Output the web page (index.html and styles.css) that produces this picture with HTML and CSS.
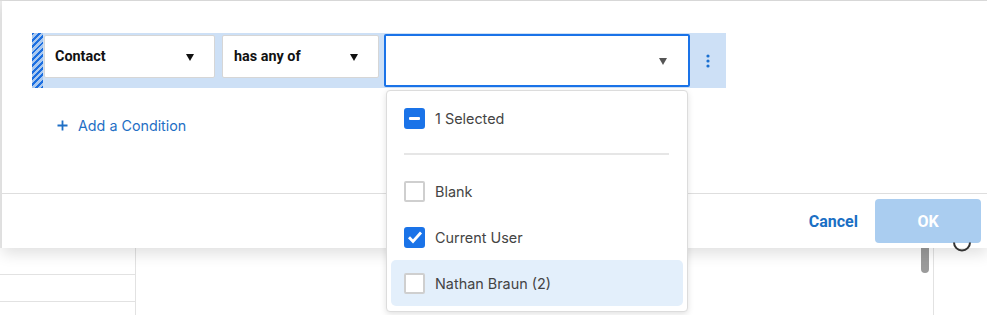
FILE: index.html
```html
<!DOCTYPE html>
<html lang="en">
<head>
    <meta charset="UTF-8">
    <meta name="viewport" content="width=device-width, initial-scale=1.0">
    <title>Filter Conditions</title>
    <link rel="stylesheet" href="styles.css">
</head>
<body>
    <div class="page">
        <div class="page-top"></div>
        <div class="page-table">
            <div class="side-col">
                <div class="side-row"></div>
                <div class="side-row"></div>
                <div class="side-row"></div>
            </div>
            <div class="main-col">
                <div class="scroll-thumb"></div>
            </div>
            <div class="tool-col"></div>
        </div>
    </div>

    <div class="modal">
        <div class="modal-body">
            <div class="condition-row">
                <div class="drag-stripe"></div>
                <div class="field field-source">
                    <span>Contact</span>
                    <span class="caret"></span>
                </div>
                <div class="field field-operator">
                    <span>has any of</span>
                    <span class="caret"></span>
                </div>
                <div class="field field-value">
                    <span></span>
                    <span class="caret caret-grey"></span>
                </div>
                <div class="row-menu">
                    <svg width="4" height="14" viewBox="0 0 4 14"><circle cx="2" cy="2" r="1.6" fill="#1a6fd0"/><circle cx="2" cy="7" r="1.6" fill="#1a6fd0"/><circle cx="2" cy="12" r="1.6" fill="#1a6fd0"/></svg>
                </div>
            </div>
            <a class="add-condition" href="#">
                <svg width="11" height="11" viewBox="0 0 11 11"><path d="M5.5 0.5v10M0.5 5.5h10" stroke="#1f6fc5" stroke-width="1.8"/></svg>
                <span>Add a Condition</span>
            </a>
        </div>
        <div class="modal-footer">
            <button class="btn-cancel">Cancel</button>
            <button class="btn-ok" disabled>OK</button>
        </div>
    </div>

    <svg class="tool-icon" width="20" height="10" viewBox="0 0 20 10"><path d="M2 0.5a8 8 0 0 0 16 0" fill="none" stroke="#333" stroke-width="2"/></svg>

    <div class="dropdown">
        <div class="option option-head">
            <span class="check check-partial"><span class="dash"></span></span>
            <span>1 Selected</span>
        </div>
        <div class="divider"></div>
        <div class="option">
            <span class="check"></span>
            <span>Blank</span>
        </div>
        <div class="option">
            <span class="check check-on">
                <svg width="16" height="14" viewBox="0 0 16 14"><path d="M2 7.2l4 4.2L14 2.5" fill="none" stroke="#fff" stroke-width="2.8"/></svg>
            </span>
            <span>Current User</span>
        </div>
        <div class="option option-hover">
            <span class="check"></span>
            <span>Nathan Braun (2)</span>
        </div>
    </div>
</body>
</html>
```

FILE: styles.css
```css
body {
    margin: 0;
    font-family: Inter, "Noto Sans", sans-serif;
    background: #fff;
    width: 987px;
    height: 315px;
    overflow: hidden;
    position: relative;
}
.page {
    display: flex;
    flex-direction: column;
    height: 315px;
    border-top: 1px solid #dcdcdc;
    box-sizing: border-box;
}
.page-top {
    height: 247px;
    flex-shrink: 0;
    background: #ececec;
}
.page-table {
    flex: 1;
    display: flex;
    overflow: hidden;
}
.side-col {
    width: 135px;
    flex-shrink: 0;
    border-right: 1px solid #e2e2e2;
}
.side-row {
    height: 26px;
    border-bottom: 1px solid #e2e2e2;
}
.main-col {
    flex: 1;
    display: flex;
    justify-content: flex-end;
    padding-right: 4px;
    border-right: 1px solid #e2e2e2;
}
.scroll-thumb {
    width: 8px;
    height: 25px;
    background: #9a9a9a;
    border-radius: 0 0 4px 4px;
}
.tool-col {
    width: 53px;
}
.tool-icon {
    position: absolute;
    top: 242px;
    left: 952px;
}

/* modal */
.modal {
    position: absolute;
    top: 1px;
    left: 2px;
    right: 0;
    height: 247px;
    background: #fff;
    box-shadow: 0 6px 14px rgba(0, 0, 0, 0.12);
    display: flex;
    flex-direction: column;
}
.modal-body {
    height: 193px;
    flex-shrink: 0;
    padding: 32px 0 0 30px;
    box-sizing: border-box;
    border-bottom: 1px solid #dedede;
}
.condition-row {
    display: flex;
    align-items: flex-start;
    width: 694px;
    height: 55px;
    background: #cde0f6;
}
.drag-stripe {
    width: 11px;
    height: 55px;
    background: repeating-linear-gradient(135deg, #1b6ee0 0 2px, #a9c8ef 2px 4.5px);
    margin-right: 1px;
}
.field {
    display: flex;
    align-items: center;
    justify-content: space-between;
    background: #fff;
    box-sizing: border-box;
    font-family: Roboto, "Liberation Sans", sans-serif;
    font-weight: bold;
    font-size: 14.4px;
    color: #111;
}
.field-source {
    width: 171px;
    height: 43px;
    margin-top: 2px;
    padding: 0 20px 0 10px;
    border: 1px solid #d6d6d6;
    border-radius: 2px;
}
.field-operator {
    width: 157px;
    height: 43px;
    margin: 2px 0 0 7px;
    padding: 0 20px 0 11px;
    border: 1px solid #d6d6d6;
    border-radius: 2px;
}
.field-value {
    width: 306px;
    height: 53px;
    margin: 1px 0 0 5px;
    padding: 0 21px 0 11px;
    border: 2px solid #1a73e8;
    border-radius: 2px;
}
.caret {
    width: 0;
    height: 0;
    border-left: 4.5px solid transparent;
    border-right: 4.5px solid transparent;
    border-top: 7px solid #111;
    margin-top: 2px;
}
.caret-grey {
    border-top-color: #555;
}
.row-menu {
    flex: 1;
    height: 55px;
    display: flex;
    align-items: center;
    justify-content: center;
}
.add-condition {
    display: inline-flex;
    align-items: center;
    gap: 10px;
    margin: 29px 0 0 25px;
    color: #1f6fc5;
    font-size: 14.3px;
    text-decoration: none;
}
.modal-footer {
    flex: 1;
    display: flex;
    align-items: center;
    justify-content: flex-end;
    padding-right: 6px;
}
.btn-cancel {
    background: none;
    border: none;
    font-family: Roboto, "Liberation Sans", sans-serif;
    font-weight: bold;
    font-size: 16px;
    color: #1a6fc4;
    padding: 0;
    margin-right: 17px;
}
.btn-ok {
    width: 106px;
    height: 44px;
    background: #aacdf0;
    border: none;
    border-radius: 4px;
    font-family: Roboto, "Liberation Sans", sans-serif;
    font-weight: bold;
    font-size: 16px;
    color: #fff;
}

/* open dropdown list */
.dropdown {
    position: absolute;
    top: 90px;
    left: 386px;
    width: 302px;
    height: 222px;
    box-sizing: border-box;
    background: #fff;
    border: 1px solid #dcdcdc;
    border-radius: 4px;
    box-shadow: 0 2px 6px rgba(0, 0, 0, 0.12);
    padding: 4px 4px;
}
.option {
    display: flex;
    align-items: center;
    gap: 10px;
    height: 46px;
    padding-left: 13px;
    font-size: 14.4px;
    color: #444;
    border-radius: 5px;
}
.option-hover {
    background: #e3effb;
}
.divider {
    height: 2px;
    background: #e6e6e6;
    margin: 12px 14px 13px 13px;
}
.check {
    width: 21px;
    height: 21px;
    box-sizing: border-box;
    border: 2px solid #cfcfcf;
    border-radius: 2px;
    background: #fff;
    display: flex;
    align-items: center;
    justify-content: center;
}
.check-on, .check-partial {
    background: #1a73e8;
    border-color: #1a73e8;
    border-radius: 3px;
}
.dash {
    width: 11px;
    height: 3px;
    background: #fff;
    border-radius: 1px;
}
```
